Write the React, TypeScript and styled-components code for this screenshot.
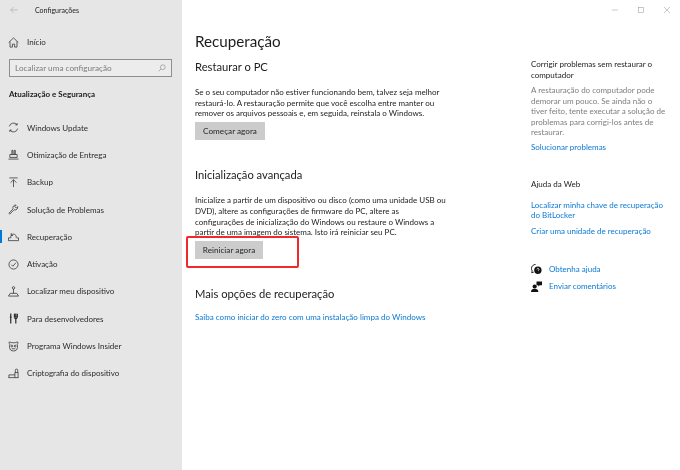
import styled, { createGlobalStyle } from "styled-components";
import type { ReactNode } from "react";

const Global = createGlobalStyle`
  html, body { margin: 0; padding: 0; background: #fff; }
  body { font-family: Lato, "Noto Sans", "Liberation Sans", sans-serif; }
`;

const stroke = { fill: "none", stroke: "currentColor", strokeWidth: 0.8 };

function NavIcon({ children }: { children: ReactNode }) {
  return (
    <IconBox viewBox="0 0 12 12" {...stroke}>
      {children}
    </IconBox>
  );
}

const navItems: { label: string; active?: boolean; icon: ReactNode }[] = [
  {
    label: "Windows Update",
    icon: (
      <>
        <path d="M1.500 4.800A4.700 4.700 0 0 1 9.800 3" />
        <path d="M10.500 7.200A4.700 4.700 0 0 1 2.200 9" />
        <path d="M10 1.200V3.200H8M2 10.800V8.800H4" />
      </>
    ),
  },
  {
    label: "Otimização de Entrega",
    icon: <path d="M.5 11h11M2 9.200V6h8v3.200H2M4.200 6V1.500h1.200V6M6.800 6V1.500H8V6" />,
  },
  {
    label: "Backup",
    icon: <path d="M1.500 1h9M6 11V3M2.800 6.200 6 3l3.200 3.200" />,
  },
  {
    label: "Solução de Problemas",
    icon: (
      <path d="M1 10.200 5.500 5.200a3 3 0 0 1 3.400-4L7.400 2.800l1.600 1.600 1.600-1.500a3 3 0 0 1-4 3.400L2 11Z" />
    ),
  },
  {
    label: "Recuperação",
    active: true,
    icon: <path d="M.5 10.500h11V7.500h-2M.5 10.500V7.500H3M3.200 7.500a3 3 0 1 1 5.600 0M3.500 2.200V5h2" />,
  },
  {
    label: "Ativação",
    icon: (
      <>
        <circle cx="6" cy="6" r="5" />
        <path d="M3.600 6.200 5.300 7.900 8.600 4.200" />
      </>
    ),
  },
  {
    label: "Localizar meu dispositivo",
    icon: (
      <>
        <circle cx="6" cy="2" r="1.300" />
        <path d="M6 3.300V8M2.500 8h7M.5 11l2-3M11.500 11l-2-3M.5 11h11" />
      </>
    ),
  },
  {
    label: "Para desenvolvedores",
    icon: <path d="M3 .5v3.500M3 5v6.500M2 4.500h2M8.500.5v4M7 .8V4.500h3.200V.8M8.500 6v5.500M7 6h3" strokeWidth={1.300} />,
  },
  {
    label: "Programa Windows Insider",
    icon: (
      <>
        <path d="M2 3.500C1 2.500 1 1.500 1.500 1 3 1.500 4 2 6 2s3-.5 4.500-1c.5.5.5 1.500-.5 2.500.7 2.500.5 5-1 6.500-1.800 1.200-4.200 1.200-6 0-1.500-1.500-1.700-4-1-6.500Z" />
        <circle cx="4.200" cy="5.500" r="1" />
        <circle cx="7.800" cy="5.500" r="1" />
        <path d="M4 8.500h4" />
      </>
    ),
  },
  {
    label: "Criptografia do dispositivo",
    icon: <path d="M.5 10.500h11M1 10.500V7.500h6.500M7.500 10.500V5h3.500v5.500M8 5V2.500a1.300 1.300 0 0 1 2.600 0V5" />,
  },
];

export default function App() {
  return (
    <Page>
      <Global />
      <Sidebar>
        <TitleBar>
          <BackArrow viewBox="0 0 10 10" {...stroke}>
            <path d="M9.500 5H.8M4.500 1.300.8 5l3.700 3.700" />
          </BackArrow>
          <AppName>Configurações</AppName>
        </TitleBar>
        <HomeRow>
          <NavIcon>
            <path d="M.8 6 6 1l5.200 5M2.200 5v6h2.600V7.800h2.400V11h2.600V5" />
          </NavIcon>
          <NavLabel>Início</NavLabel>
        </HomeRow>
        <SearchBox>
          <SearchText>Localizar uma configuração</SearchText>
          <SearchIcon viewBox="0 0 10 10" {...stroke}>
            <circle cx="6" cy="4" r="3" />
            <path d="M3.800 6.200.8 9.200" />
          </SearchIcon>
        </SearchBox>
        <GroupTitle>Atualização e Segurança</GroupTitle>
        <NavList>
          {navItems.map((item) => (
            <NavRow key={item.label} $active={item.active}>
              <NavIcon>{item.icon}</NavIcon>
              <NavLabel>{item.label}</NavLabel>
            </NavRow>
          ))}
        </NavList>
      </Sidebar>

      <Main>
        <PageTitle>Recuperação</PageTitle>

        <SectionTitle>Restaurar o PC</SectionTitle>
        <Body>
          Se o seu computador não estiver funcionando bem, talvez seja melhor
          <br />
          restaurá-lo. A restauração permite que você escolha entre manter ou
          <br />
          remover os arquivos pessoais e, em seguida, reinstala o Windows.
        </Body>
        <ActionButton $width={70}>Começar agora</ActionButton>

        <SectionTitle $gap={27}>Inicialização avançada</SectionTitle>
        <Body>
          Inicialize a partir de um dispositivo ou disco (como uma unidade USB ou
          <br />
          DVD), altere as configurações de firmware do PC, altere as
          <br />
          configurações de inicialização do Windows ou restaure o Windows a
          <br />
          partir de uma imagem do sistema. Isto irá reiniciar seu PC.
        </Body>
        <HighlightWrap>
          <ActionButton $width={68}>Reiniciar agora</ActionButton>
          <RedMark />
        </HighlightWrap>

        <SectionTitle $gap={27}>Mais opções de recuperação</SectionTitle>
        <MainLink>Saiba como iniciar do zero com uma instalação limpa do Windows</MainLink>
      </Main>

      <Aside>
        <WindowControls>
          <WinGlyph viewBox="0 0 10 10" {...stroke}>
            <path d="M0 5h10" />
          </WinGlyph>
          <WinGlyph viewBox="0 0 10 10" {...stroke}>
            <rect x=".5" y=".5" width="9" height="9" />
          </WinGlyph>
          <WinGlyph viewBox="0 0 10 10" {...stroke}>
            <path d="m0 0 10 10M10 0 0 10" />
          </WinGlyph>
        </WindowControls>

        <AsideTitle>
          Corrigir problemas sem restaurar o
          <br />
          computador
        </AsideTitle>
        <AsideText>
          A restauração do computador pode
          <br />
          demorar um pouco. Se ainda não o
          <br />
          tiver feito, tente executar a solução de
          <br />
          problemas para corrigi-los antes de
          <br />
          restaurar.
        </AsideText>
        <AsideLink>Solucionar problemas</AsideLink>

        <AsideTitle $gap={27}>Ajuda da Web</AsideTitle>
        <AsideLink $gap={10}>
          Localizar minha chave de recuperação
          <br />
          do BitLocker
        </AsideLink>
        <AsideLink $gap={5}>Criar uma unidade de recuperação</AsideLink>

        <HelpRow $gap={28}>
          <HelpIcon viewBox="0 0 12 12">
            <path d="M5 .5a4.500 4.500 0 0 0-4.500 4.500c0 1 .3 1.800.8 2.500L.8 9.500l2.200-.6" fill="none" stroke="#111" />
            <circle cx="7.500" cy="6.800" r="4" fill="#111" />
            <path d="M6.300 5.800a1.200 1.200 0 1 1 1.700 1.200v.7M8 9h.1" fill="none" stroke="#fff" strokeWidth=".9" />
          </HelpIcon>
          <AsideLink>Obtenha ajuda</AsideLink>
        </HelpRow>
        <HelpRow $gap={6}>
          <HelpIcon viewBox="0 0 12 12">
            <circle cx="4" cy="6" r="2.300" fill="#111" />
            <path d="M0 12c0-2.500 1.500-3.500 4-3.500S8 9.500 8 12Z" fill="#111" />
            <path d="M6 .5h6v4H9.500L8 6V4.500H6Z" fill="#111" />
          </HelpIcon>
          <AsideLink>Enviar comentários</AsideLink>
        </HelpRow>
      </Aside>
    </Page>
  );
}

const Page = styled.div`
  width: 680px;
  height: 470px;
  display: flex;
  overflow: hidden;
  background: #fff;
  color: #1a1a1a;
  filter: blur(0.3px);
`;

const Sidebar = styled.nav`
  width: 182px;
  flex: none;
  background: #e6e6e6;
  display: flex;
  flex-direction: column;
`;

const TitleBar = styled.div`
  height: 19px;
  display: flex;
  align-items: center;
  gap: 17px;
  padding-left: 10px;
`;

const BackArrow = styled.svg`
  width: 8px;
  height: 8px;
  color: #a8a8a8;
`;

const AppName = styled.span`
  font-size: 7px;
  color: #222;
`;

const IconBox = styled.svg`
  width: 11px;
  height: 11px;
  flex: none;
  color: #2b2b2b;
`;

const HomeRow = styled.div`
  margin-top: 13px;
  height: 20px;
  display: flex;
  align-items: center;
  gap: 8px;
  padding-left: 8px;
`;

const NavLabel = styled.span`
  font-size: 8px;
  color: #2b2b2b;
  white-space: nowrap;
`;

const SearchBox = styled.div`
  margin: 7px 0 0 9px;
  width: 163px;
  height: 18px;
  box-sizing: border-box;
  border: 1px solid #8e8e8e;
  background: #ececec;
  display: flex;
  align-items: center;
  justify-content: space-between;
  padding: 0 5px;
`;

const SearchText = styled.span`
  font-size: 8.200px;
  color: #7c7c7c;
`;

const SearchIcon = styled.svg`
  width: 8px;
  height: 8px;
  color: #8a8a8a;
`;

const GroupTitle = styled.div`
  margin: 12px 0 0 9px;
  font-size: 8px;
  font-weight: 700;
  color: #1a1a1a;
`;

const NavList = styled.div`
  margin-top: 15px;
  display: flex;
  flex-direction: column;
`;

const NavRow = styled.div<{ $active?: boolean }>`
  height: 27.300px;
  display: flex;
  align-items: center;
  gap: 8px;
  padding-left: 8px;
  position: relative;
  &::before {
    content: "";
    display: ${({ $active }) => ($active ? "block" : "none")};
    position: absolute;
    left: 0;
    top: 7px;
    width: 2px;
    height: 13px;
    background: #0078d7;
  }
`;

const Main = styled.main`
  width: 349px;
  flex: none;
  box-sizing: border-box;
  padding: 30px 0 0 13px;
  display: flex;
  flex-direction: column;
  align-items: flex-start;
`;

const PageTitle = styled.h1`
  margin: 0;
  font-size: 15.200px;
  line-height: 22px;
  font-weight: 400;
  color: #1c1c1c;
`;

const SectionTitle = styled.h2<{ $gap?: number }>`
  margin: ${({ $gap }) => $gap ?? 7}px 0 0;
  font-size: 11.200px;
  line-height: 16px;
  font-weight: 400;
  color: #1c1c1c;
`;

const Body = styled.p`
  margin: 12px 0 0;
  font-size: 8px;
  line-height: 10.700px;
  color: #222;
  white-space: nowrap;
`;

const ActionButton = styled.button<{ $width: number }>`
  margin: 3px 0 0;
  padding: 0;
  width: ${({ $width }) => $width}px;
  height: 18px;
  border: 0;
  background: #cccccc;
  font: inherit;
  font-size: 8.200px;
  color: #262626;
`;

const HighlightWrap = styled.div`
  position: relative;
  margin-top: 0;
  display: flex;
`;

const RedMark = styled.div`
  position: absolute;
  left: -9px;
  top: -2px;
  width: 113px;
  height: 32px;
  box-sizing: border-box;
  border: 2px solid #f02a2a;
  border-radius: 2px;
`;

const MainLink = styled.a`
  margin-top: 10px;
  font-size: 8.050px;
  line-height: 11px;
  color: #0a78d4;
  white-space: nowrap;
`;

const Aside = styled.aside`
  flex: 1;
  min-width: 0;
  display: flex;
  flex-direction: column;
  align-items: flex-start;
`;

const WindowControls = styled.div`
  align-self: flex-end;
  display: flex;
  gap: 20px;
  padding: 7px 10px 0 0;
  height: 56px;
  box-sizing: border-box;
  align-items: flex-start;
`;

const WinGlyph = styled.svg`
  width: 6px;
  height: 6px;
  color: #8c8c8c;
`;

const AsideTitle = styled.div<{ $gap?: number }>`
  margin-top: ${({ $gap }) => $gap ?? 3}px;
  font-size: 8px;
  line-height: 10.500px;
  color: #222;
  white-space: nowrap;
`;

const AsideText = styled.div`
  margin-top: 5px;
  font-size: 8px;
  line-height: 10.500px;
  color: #7d7d7d;
  white-space: nowrap;
`;

const AsideLink = styled.a<{ $gap?: number }>`
  display: block;
  margin-top: ${({ $gap }) => $gap ?? 4}px;
  font-size: 8px;
  line-height: 10.500px;
  color: #0a78d4;
  white-space: nowrap;
`;

const HelpRow = styled.div<{ $gap: number }>`
  margin-top: ${({ $gap }) => $gap}px;
  display: flex;
  align-items: center;
  gap: 7px;
  & > a {
    margin-top: 0;
  }
`;

const HelpIcon = styled.svg`
  width: 11px;
  height: 11px;
  flex: none;
`;
